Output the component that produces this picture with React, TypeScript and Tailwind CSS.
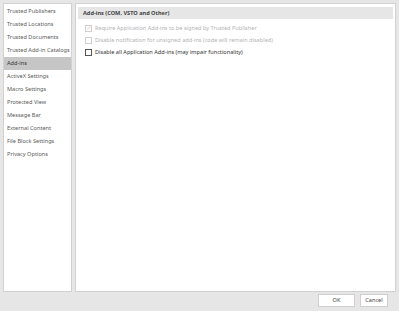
const items = [
  "Trusted Publishers",
  "Trusted Locations",
  "Trusted Documents",
  "Trusted Add-in Catalogs",
  "Add-ins",
  "ActiveX Settings",
  "Macro Settings",
  "Protected View",
  "Message Bar",
  "External Content",
  "File Block Settings",
  "Privacy Options",
];

const options = [
  { label: "Require Application Add-ins to be signed by Trusted Publisher", checked: true, disabled: true },
  { label: "Disable notification for unsigned add-ins (code will remain disabled)", checked: false, disabled: true },
  { label: "Disable all Application Add-ins (may impair functionality)", checked: false, disabled: false },
];

const Box = ({ checked, disabled }: { checked: boolean; disabled: boolean }) => (
  <span
    className={
      "flex h-[7px] w-[7px] shrink-0 items-center justify-center border bg-white " +
      (disabled ? "border-[#cfcfcf]" : "border-[#555555]")
    }
  >
    {checked && (
      <svg width="6" height="6" viewBox="0 0 6 6">
        <path d="M0.8 3.2 L2.3 4.6 L5.2 1.2" fill="none" stroke="#c2c2c2" strokeWidth="0.8" />
      </svg>
    )}
  </span>
);

export default function App() {
  return (
    <div
      className="flex h-[311px] w-[399px] flex-col bg-[#e6e6e6] pl-[3px] pr-[3px] pt-[3px]"
      style={{ fontFamily: '"Noto Sans", "Open Sans", sans-serif' }}
    >
      <div className="flex h-[289px] gap-[3px]">
        <div className="w-[69px] border border-[#d2d2d2] bg-white pt-[1px]">
          {items.map((it) => (
            <div
              key={it}
              className={
                "h-[13px] whitespace-nowrap pl-[3px] text-[5.6px] leading-[13px] " +
                (it === "Add-ins" ? "bg-[#c6c6c6] text-[#333333]" : "text-[#5a5a5a]")
              }
            >
              {it}
            </div>
          ))}
        </div>
        <div className="flex-1 border border-[#d2d2d2] bg-white px-[2px] pt-[3px]">
          <div className="h-[12px] bg-[#e6e6e6] pl-[5px] text-[5.6px] font-bold leading-[12px] text-[#444444]">
            Add-ins (COM, VSTO and Other)
          </div>
          <div className="mt-[3px] flex flex-col pl-[7px]">
            {options.map((o) => (
              <div key={o.label} className="flex h-[12px] items-center gap-[3px]">
                <Box checked={o.checked} disabled={o.disabled} />
                <span
                  className={
                    "whitespace-nowrap text-[5.6px] " + (o.disabled ? "text-[#b4b4b4]" : "text-[#333333]")
                  }
                >
                  {o.label}
                </span>
              </div>
            ))}
          </div>
        </div>
      </div>
      <div className="flex flex-1 items-start justify-end gap-[5px] pr-[8px] pt-[2px]">
        <button className="h-[13px] w-[37px] border border-[#cfcfcf] bg-white text-[5.6px] text-[#444444]">OK</button>
        <button className="h-[13px] w-[28px] border border-[#cfcfcf] bg-white text-[5.6px] text-[#444444]">Cancel</button>
      </div>
    </div>
  );
}
